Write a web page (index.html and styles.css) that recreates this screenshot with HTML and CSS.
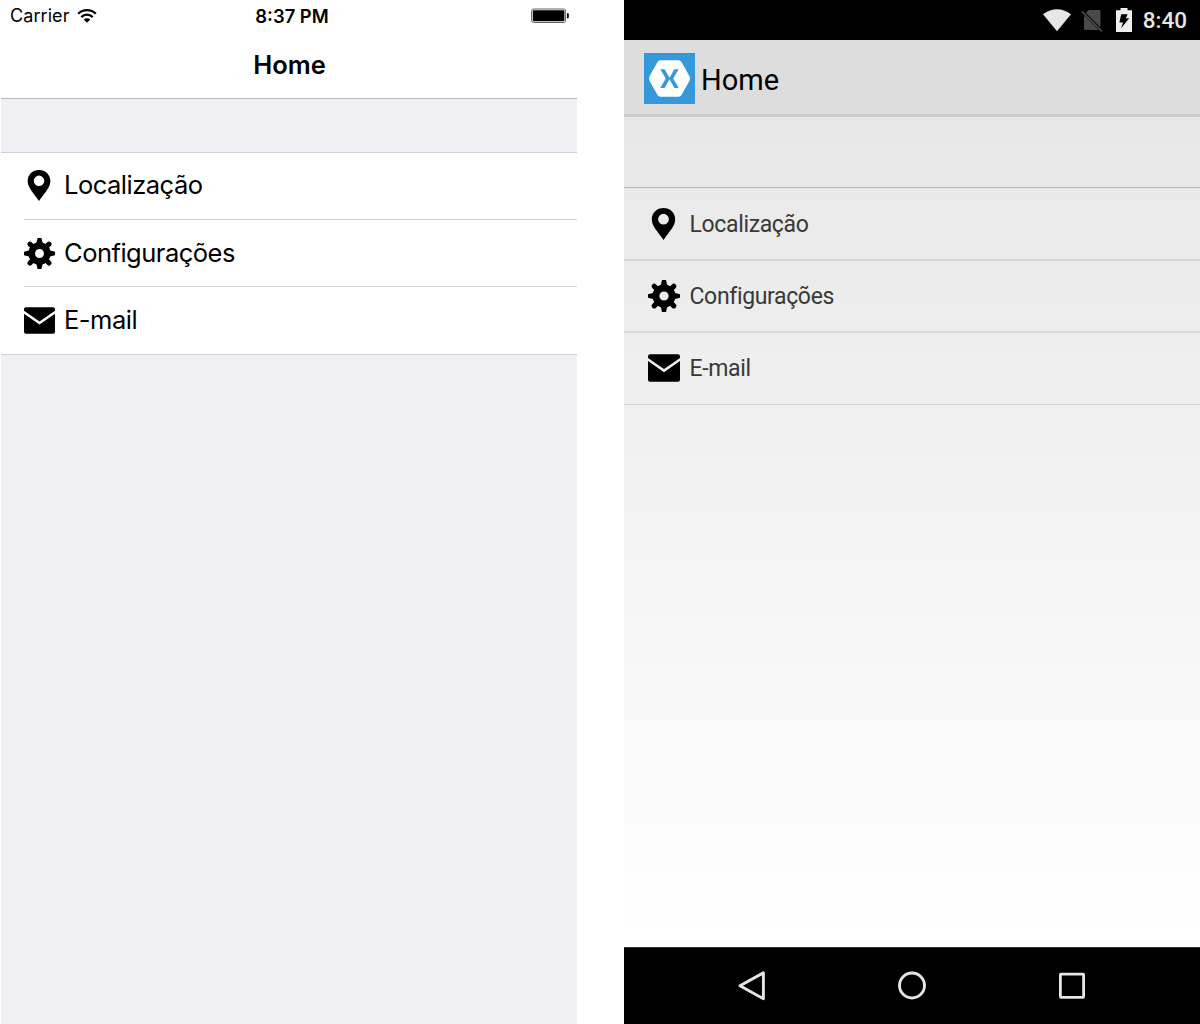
FILE: index.html
```html
<!DOCTYPE html>
<html lang="pt-BR">
<head>
<meta charset="utf-8">
<title>Home</title>
<link rel="stylesheet" href="styles.css">
</head>
<body>
<svg class="defs" width="0" height="0">
  <symbol id="pin" viewBox="0 0 32 32"><path fill-rule="evenodd" d="M15.500 0C9 0 3.800 4.800 3.800 11.300C3.800 18.500 9.500 23 15.500 32C21.500 23 27.200 18.500 27.200 11.300C27.200 4.800 22 0 15.500 0ZM15.500 5.800a5.400 5.400 0 1 1 0 10.800a5.400 5.400 0 1 1 0-10.800Z"/></symbol>
  <symbol id="gear" viewBox="0 0 32 32"><path fill-rule="evenodd" d="M16 4.500a11.500 11.500 0 1 0 0 23a11.500 11.500 0 1 0 0-23ZM16 11.400a4.600 4.600 0 1 1 0 9.200a4.600 4.600 0 1 1 0-9.200Z"/><path d="M14 0h4l1.400 6h-6.800ZM14 32h4l1.400-6h-6.800ZM0 14.200v3.600l6 1.500v-6.600ZM32 14.200v3.600l-6 1.500v-6.600Z"/><path fill="none" stroke="#000" stroke-width="5.200" stroke-linecap="round" d="M6.200 6.300 9 9M25.800 6.300 23 9M6.200 25.800 9 23M25.800 25.800 23 23"/></symbol>
  <symbol id="mail" viewBox="0 0 32 32"><path d="M2 2.200h28a2 2 0 0 1 2 2v1.700L16 17 0 5.900V4.200a2 2 0 0 1 2-2ZM0 9 16 20.200 32 9V27.700a2 2 0 0 1-2 2H2a2 2 0 0 1-2-2Z"/></symbol>
</svg>
<main class="screens">
  <section class="ios">
    <header class="ios-status">
      <div class="ios-carrier"><span>Carrier</span>
        <svg class="ios-wifi" width="20" height="15" viewBox="0 0 20 15"><g fill="none" stroke="#000" stroke-width="2.300"><path d="M1.200 4.800A12.500 12.500 0 0 1 18.800 4.800"/><path d="M4.300 8.100A8 8 0 0 1 15.700 8.100"/></g><path d="M10 13.800 6.700 10.500A4.700 4.700 0 0 1 13.300 10.500Z"/></svg>
      </div>
      <time class="ios-time">8:37 PM</time>
      <svg class="ios-battery" width="38" height="15" viewBox="0 0 38 15"><rect x=".6" y="0" width="34" height="13.500" rx="2" fill="none" stroke="#666"/><rect x="1.800" y="1.200" width="31.600" height="11.100" rx=".8"/><path d="M36 4.200h.8q1 0 1 1v3q0 1-1 1H36Z"/></svg>
    </header>
    <h1 class="ios-title">Home</h1>
    <ul class="ios-list">
      <li class="ios-row"><svg class="ios-icon"><use href="#pin"/></svg><span>Localização</span></li>
      <li class="ios-row"><svg class="ios-icon"><use href="#gear"/></svg><span>Configurações</span></li>
      <li class="ios-row"><svg class="ios-icon"><use href="#mail"/></svg><span>E-mail</span></li>
    </ul>
  </section>
  <section class="android">
    <header class="and-status">
      <svg width="28" height="23" viewBox="0 0 28 23"><path fill="#e6e6e6" d="M0 5.200Q14-4.800 28 5.200L14 22.300Z"/></svg>
      <svg class="sim" width="22" height="23" viewBox="0 0 22 23"><path fill="#4a4a4a" d="M7.500 1H18q1.500 0 1.500 1.500V18.500L5 4ZM3 6.300 17.700 21H4.500Q3 21 3 19.500Z"/><path fill="none" stroke="#4a4a4a" stroke-width="1.800" d="M.8 2.300 20.800 22.300"/></svg>
      <svg class="charge" width="16" height="24" viewBox="0 0 16 24"><path fill="#eee" d="M4.500 0h7v2.300H16V24H0V2.300h4.500Z"/><path d="M5.200 6.200h6.500L9.800 10.200h3.400L5 20.500 7 14.500H3.400Z"/></svg>
      <time>8:40</time>
    </header>
    <div class="and-bar">
      <svg class="logo" width="51" height="51" viewBox="0 0 51 51"><path fill="#3598db" d="M0 0h51v51H0Z"/><path fill="#fff" d="M16.500 7.200h18q2 0 3 1.700l8 14.400q1.200 2.200 0 4.400L37.500 42.100q-1 1.700-3 1.700H16.500q-2 0-3-1.700L5.500 27.700q-1.200-2.200 0-4.400l8-14.400q1-1.700 3-1.700Z"/><path fill="#3598db" d="M16.300 16.200h4.300L25.500 24.800 30.400 16.200H34.700L29.200 25.500 34.700 34.900H30.400L25.500 26.200 20.600 34.900H16.300L21.800 25.500Z"/></svg>
      <h1>Home</h1>
    </div>
    <div class="and-section"></div>
    <ul class="and-list">
      <li class="and-row"><svg class="and-icon"><use href="#pin"/></svg><span>Localização</span></li>
      <li class="and-row"><svg class="and-icon"><use href="#gear"/></svg><span>Configurações</span></li>
      <li class="and-row"><svg class="and-icon"><use href="#mail"/></svg><span>E-mail</span></li>
    </ul>
    <nav class="and-nav">
      <svg width="28" height="30" viewBox="0 0 28 30"><path fill="none" stroke="#e6e6e6" stroke-width="2.900" stroke-linejoin="round" d="M26.400 1.800v26L3 14.800Z"/></svg>
      <svg width="28" height="28" viewBox="0 0 28 28"><circle cx="14" cy="13.500" r="12.500" fill="none" stroke="#e6e6e6" stroke-width="2.900"/></svg>
      <svg width="26" height="26" viewBox="0 0 26 26"><rect x="1.400" y="1.200" width="23.200" height="23.200" rx=".6" fill="none" stroke="#e6e6e6" stroke-width="2.800"/></svg>
    </nav>
  </section>
</main>
</body>
</html>
```
FILE: styles.css
```css
* { box-sizing: border-box; margin: 0; padding: 0; }
body { background: #fff; overflow: hidden; }
svg { display: block; flex: none; overflow: visible; }
.defs { height: 0; }
ul { list-style: none; }
.screens { display: flex; justify-content: space-between; width: 1200px; height: 1024px; padding-left: 1px; }
.ios, .android { display: flex; flex-direction: column; width: 576px; height: 1024px; }

.ios { background: #efeff4; color: #000; font-family: Inter, sans-serif; }
.ios-status { display: grid; grid-template-columns: 1fr auto 1fr; align-items: center; height: 32px; padding: 0 8px 0 9px; background: #fff; font-size: 18px; line-height: 32px; }
.ios-carrier { display: flex; align-items: center; gap: 7px; letter-spacing: .07px; }
.ios-time { padding-left: 5px; font-size: 18.400px; font-weight: 600; }
.ios-battery { justify-self: end; }
.ios-title { height: 67px; padding-left: 1px; border-bottom: 1px solid #b7b7bb; background: #fff; font-size: 25.500px; font-weight: 600; line-height: 66px; text-align: center; }
.ios-list { margin-top: 53px; border-top: 1px solid #d0d0d5; border-bottom: 1px solid #d0d0d5; background: #fff; }
.ios-row { display: flex; align-items: flex-start; gap: 9px; height: 66px; margin-left: 23px; padding-top: 17px; font-size: 25.500px; line-height: 29px; letter-spacing: -.5px; }
.ios-row + .ios-row { height: 67px; padding-top: 18px; border-top: 1px solid #d5d5d8; }
.ios-row + .ios-row:last-child { height: 68px; }
.ios-icon { width: 31px; height: 31px; }

.android { background: linear-gradient(#e7e7e7 100px, #fff 930px); color: #393939; font-family: Roboto, sans-serif; }
.and-status { display: flex; align-items: center; justify-content: flex-end; height: 40px; padding-right: 13px; background: #000; color: #e6e6e6; font-size: 22.500px; font-weight: 500; line-height: 42px; }
.sim { margin-left: 10px; }
.charge { margin: 0 11px 0 13px; }
.and-bar { display: flex; align-items: flex-start; gap: 6px; height: 77px; padding: 13px 0 0 20px; border-bottom: 3px solid #cbcbcb; background: #ddd; color: #000; }
.and-bar h1 { font-size: 29px; font-weight: 400; line-height: 54px; }
.and-section { height: 71px; border-bottom: 1px solid #94c6df; }
.and-row { display: flex; align-items: flex-start; gap: 9.500px; height: 71px; padding: 20px 0 0 24px; font-size: 23px; line-height: 34px; letter-spacing: -.35px; }
.and-row + .and-row { height: 72px; padding-top: 19px; border-top: 2px solid #d7d7d7; }
.and-row + .and-row:last-child { height: 74px; border-bottom: 1px solid #d7d7d7; }
.and-icon { width: 32px; height: 32px; }
.and-nav { display: flex; align-items: center; justify-content: space-between; height: 77px; margin-top: auto; padding: 0 115px 0 113px; border-top: 1px solid #333; background: #000; }
```
